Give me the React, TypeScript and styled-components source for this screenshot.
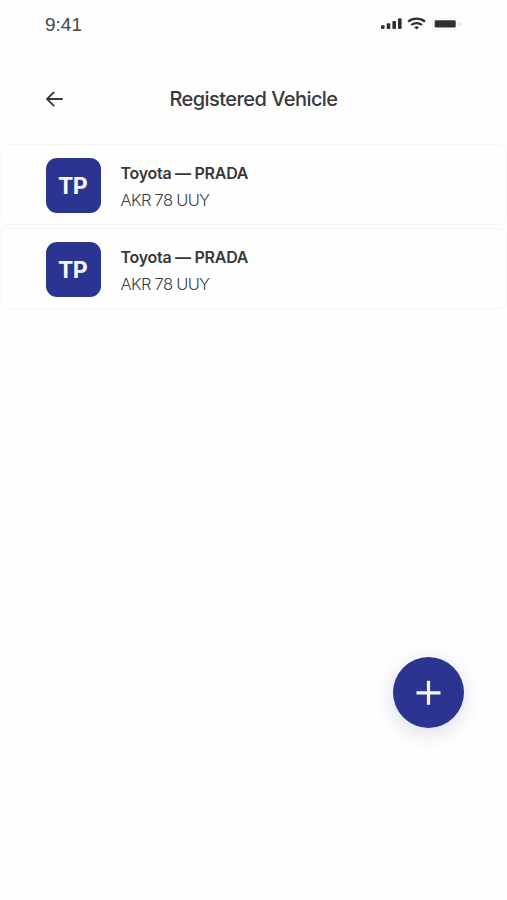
import React from "react";
import styled, { createGlobalStyle } from "styled-components";

const GlobalStyle = createGlobalStyle`
  * { box-sizing: border-box; }
  body { margin: 0; background: #fefefe; font-family: Inter, sans-serif; color: #38383a; }
  button { border: 0; padding: 0; background: none; color: inherit; font: inherit; cursor: pointer; }
`;

const Screen = styled.main`
  display: flex;
  flex-direction: column;
  width: 100%;
  height: 900px;
  overflow: hidden;
`;

const StatusBar = styled.div`
  display: flex;
  justify-content: space-between;
  align-items: center;
  height: 48px;
  padding: 0 46px 0 45px;
`;

const Clock = styled.time`
  padding-top: 2px;
  font: 19px/24px "Liberation Sans", Arial, sans-serif;
  color: #464646;
`;

const StatusIcons = styled.svg`
  display: block;
  width: 82px;
  height: 16px;
`;

const Header = styled.header`
  display: grid;
  grid-template-columns: 1fr auto 1fr;
  align-items: center;
  height: 44px;
  margin-top: 28px;
  padding: 2px 45px 0;
`;

const BackButton = styled.button`
  display: flex;
  width: 20px;
  height: 20px;
`;

const Title = styled.h1`
  margin: 0;
  font-size: 20px;
  line-height: 26px;
  font-weight: 500;
  letter-spacing: -0.55px;
`;

const VehicleList = styled.ul`
  display: flex;
  flex-direction: column;
  gap: 5px;
  margin: 25px 0 0;
  padding: 0 1px;
  list-style: none;
`;

const VehicleCard = styled.li`
  display: flex;
  align-items: center;
  gap: 20px;
  height: 79px;
  padding: 2px 44.5px 0;
  border-radius: 6px;
  background: #fefefe;
  box-shadow: 0 0 3px rgba(0, 0, 0, 0.08);
`;

const Badge = styled.div`
  display: flex;
  align-items: center;
  justify-content: center;
  width: 55px;
  height: 55px;
  padding-right: 1px;
  border-radius: 11px;
  background: #2b3490;
  color: #f7f7fc;
  font-size: 23px;
  font-weight: 700;
  letter-spacing: -0.6px;
`;

const Details = styled.div`
  display: flex;
  flex-direction: column;
  gap: 3px;
  padding-top: 1px;
`;

const Model = styled.span`
  font-size: 16px;
  line-height: 24px;
  font-weight: 600;
  letter-spacing: -0.28px;
`;

const Plate = styled.span`
  font-size: 16.5px;
  line-height: 24px;
  font-weight: 300;
  letter-spacing: -0.7px;
  color: #404042;
`;

const AddButton = styled.button`
  display: flex;
  align-items: center;
  justify-content: center;
  align-self: flex-end;
  width: 71px;
  height: 71px;
  margin: auto 43px 172px 0;
  border-radius: 50%;
  background: #2b3490;
  box-shadow: 0 5px 20px rgba(43, 52, 144, 0.17);
`;

const vehicles = [
  { id: 1, initials: "TP", model: "Toyota — PRADA", plate: "AKR 78 UUY" },
  { id: 2, initials: "TP", model: "Toyota — PRADA", plate: "AKR 78 UUY" },
];

export default function App() {
  return (
    <Screen>
      <GlobalStyle />
      <StatusBar>
        <Clock>9:41</Clock>
        <StatusIcons viewBox="0 0 82 16" aria-label="Signal, Wi-Fi, battery">
          <g fill="#303032">
            <rect x="2" y="9.3" width="3.6" height="3.7" rx="1" />
            <rect x="7.7" y="7.3" width="3.6" height="5.7" rx="1" />
            <rect x="13.4" y="5" width="3.6" height="8" rx="1" />
            <rect x="19" y="2.2" width="3.6" height="10.8" rx="1" />
            <rect x="55.7" y="4.3" width="21" height="7.3" rx="1.3" />
          </g>
          <g fill="none" stroke="#303032" strokeWidth="2.2">
            <path d="M29.2 5.7c4.7-4 12.1-4 16.8 0" />
            <path d="M32.2 9c3.1-2.5 7.7-2.5 10.8 0" />
          </g>
          <path d="M35 11.1q2.6-1.8 5.2 0L37.6 13.6Z" fill="#303032" />
          <rect x="53.5" y="2.2" width="25" height="11.5" rx="3" fill="none" stroke="#f2f2f2" />
          <path d="M80 6v4q1.6-.5 1.6-2T80 6Z" fill="#cfcfcf" />
        </StatusIcons>
      </StatusBar>
      <Header>
        <BackButton aria-label="Back">
          <svg width="20" height="20" viewBox="0 0 20 20" fill="none" stroke="#38383a" strokeWidth="1.8">
            <path d="M17.7 10H2.3M9.2 2.8L2 10l7.2 7.2" />
          </svg>
        </BackButton>
        <Title>Registered Vehicle</Title>
      </Header>
      <VehicleList>
        {vehicles.map((v) => (
          <VehicleCard key={v.id}>
            <Badge>{v.initials}</Badge>
            <Details>
              <Model>{v.model}</Model>
              <Plate>{v.plate}</Plate>
            </Details>
          </VehicleCard>
        ))}
      </VehicleList>
      <AddButton aria-label="Add vehicle">
        <svg width="26" height="26" viewBox="0 0 26 26" fill="none" stroke="#f7f7fc" strokeWidth="3.2">
          <path d="M12.5 .8v24M.5 12.8h24" />
        </svg>
      </AddButton>
    </Screen>
  );
}
